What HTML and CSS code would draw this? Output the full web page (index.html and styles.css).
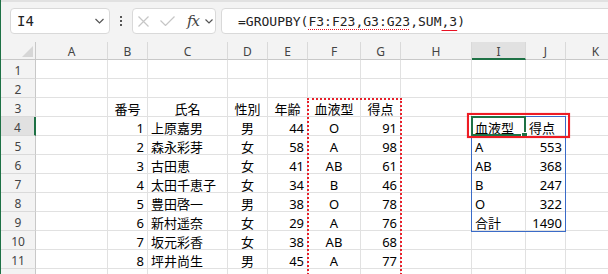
FILE: index.html
```html
<!DOCTYPE html>
<html>
<head>
    <meta charset="utf-8">
    <title>GROUPBY</title>
    <link rel="stylesheet" href="styles.css">
</head>
<body>
    <div class="app">
        <div class="formula-bar">
            <div class="name-box">
                <span class="name-text">I4</span>
                <svg class="chevron" width="9" height="6" viewBox="0 0 9 6"><polyline points="0.5,1 4.5,5 8.5,1"/></svg>
            </div>
            <div class="grip"><span></span><span></span><span></span></div>
            <div class="fx-box">
                <svg class="cancel" width="13" height="11" viewBox="0 0 13 11"><path d="M1.5 0.5 L11.5 10.5 M11.5 0.5 L1.5 10.5"/></svg>
                <svg class="enter" width="15" height="10" viewBox="0 0 15 10"><path d="M0.5 4.5 L5.5 9.5 L14.5 0.5"/></svg>
                <span class="fx">fx</span>
                <svg class="chevron" width="8" height="5" viewBox="0 0 8 5"><polyline points="0.5,0.5 4,4 7.5,0.5"/></svg>
            </div>
            <div class="formula">=GROUPBY(<span class="ref">F3:F23,G3:G23</span>,SUM<span class="arg">,3</span>)</div>
        </div>

        <div class="grid">
            <div class="corner"></div><div class="ch">A</div><div class="ch">B</div><div class="ch">C</div><div class="ch">D</div><div class="ch">E</div><div class="ch">F</div><div class="ch">G</div><div class="ch">H</div><div class="ch sel">I</div><div class="ch">J</div><div class="ch">K</div>

            <div class="rh">1</div><div></div><div></div><div></div><div></div><div></div><div></div><div></div><div></div><div></div><div></div><div></div>
            <div class="rh">2</div><div></div><div></div><div></div><div></div><div></div><div></div><div></div><div></div><div></div><div></div><div></div>
            <div class="rh">3</div><div></div><div class="m">番号</div><div class="m">氏名</div><div class="m">性別</div><div class="m">年齢</div><div class="m">血液型</div><div class="m">得点</div><div></div><div></div><div></div><div></div>
            <div class="rh sel">4</div><div></div><div class="r">1</div><div>上原嘉男</div><div class="m">男</div><div class="r">44</div><div class="m">O</div><div class="r">91</div><div></div><div>血液型</div><div>得点</div><div></div>
            <div class="rh">5</div><div></div><div class="r">2</div><div>森永彩芽</div><div class="m">女</div><div class="r">58</div><div class="m">A</div><div class="r">98</div><div></div><div>A</div><div class="r">553</div><div></div>
            <div class="rh">6</div><div></div><div class="r">3</div><div>古田恵</div><div class="m">女</div><div class="r">41</div><div class="m">AB</div><div class="r">61</div><div></div><div>AB</div><div class="r">368</div><div></div>
            <div class="rh">7</div><div></div><div class="r">4</div><div>太田千恵子</div><div class="m">女</div><div class="r">34</div><div class="m">B</div><div class="r">46</div><div></div><div>B</div><div class="r">247</div><div></div>
            <div class="rh">8</div><div></div><div class="r">5</div><div>豊田啓一</div><div class="m">男</div><div class="r">38</div><div class="m">O</div><div class="r">78</div><div></div><div>O</div><div class="r">322</div><div></div>
            <div class="rh">9</div><div></div><div class="r">6</div><div>新村遥奈</div><div class="m">女</div><div class="r">29</div><div class="m">A</div><div class="r">76</div><div></div><div>合計</div><div class="r">1490</div><div></div>
            <div class="rh">10</div><div></div><div class="r">7</div><div>坂元彩香</div><div class="m">女</div><div class="r">38</div><div class="m">AB</div><div class="r">68</div><div></div><div></div><div></div><div></div>
            <div class="rh">11</div><div></div><div class="r">8</div><div>坪井尚生</div><div class="m">男</div><div class="r">45</div><div class="m">A</div><div class="r">77</div><div></div><div></div><div></div><div></div>
            <div class="rh">12</div><div></div><div class="r">9</div><div>中村美咲</div><div class="m">女</div><div class="r">52</div><div class="m">O</div><div class="r">85</div><div></div><div></div><div></div><div></div>
        </div>

        <!-- range highlights drawn over the grid -->
        <div class="marquee"></div>
        <div class="spill"></div>
        <div class="active"></div>
        <div class="handle"></div>
        <div class="callout"></div>
    </div>
</body>
</html>
```

FILE: styles.css
```css
body {
    margin: 0;
    background: #fff;
    overflow: hidden;
}

.app {
    position: relative;
    height: 274px;
    overflow: hidden;
    border-left: 1px solid #1e7145;
    font-family: "Noto Sans", "Noto Sans CJK JP", sans-serif;
    color: #000;
}

/* Formula bar */
.formula-bar {
    height: 42px;
    box-sizing: border-box;
    border-top: 2px solid #e1e1e1;
    background: #f3f3f3;
    display: flex;
    align-items: flex-start;
    padding: 6px 0 0 9px;
}

.name-box,
.fx-box,
.formula {
    height: 26px;
    box-sizing: border-box;
    background: #fff;
    border: 1px solid #d9d9d9;
    border-radius: 4px;
    display: flex;
    align-items: center;
}

.name-box {
    width: 100px;
    justify-content: space-between;
    padding: 0 5px 0 6px;
}

.name-text {
    font-family: "DejaVu Sans Mono", monospace;
    font-size: 14px;
    color: #222;
}

.chevron polyline {
    fill: none;
    stroke: #555;
    stroke-width: 1.2;
}

.grip {
    width: 22px;
    height: 26px;
    display: flex;
    flex-direction: column;
    align-items: center;
    justify-content: center;
    gap: 2px;
}

.grip span {
    width: 2px;
    height: 2px;
    background: #555;
}

.fx-box {
    width: 84px;
    padding-left: 4px;
}

.cancel path,
.enter path {
    fill: none;
    stroke: #c6c6c6;
    stroke-width: 1.2;
}

.enter {
    margin-left: 10px;
}

.fx {
    margin-left: 12px;
    font-family: "DejaVu Serif", serif;
    font-style: italic;
    font-size: 15px;
    color: #444;
    letter-spacing: -1px;
}

.fx-box .chevron {
    margin-left: 6px;
}

.formula {
    flex: 1;
    margin: 0 -30px 0 5px;
    padding: 1px 0 0 16px;
    font-family: "DejaVu Sans Mono", monospace;
    font-size: 13px;
    color: #222;
    white-space: nowrap;
}

.ref {
    text-decoration: underline dotted #e81123;
    text-decoration-thickness: 1px;
    text-underline-offset: 3px;
}

.arg {
    text-decoration: underline solid #e81123;
    text-decoration-thickness: 1px;
    text-underline-offset: 4px;
}

/* Sheet */
.grid {
    display: grid;
    grid-template-columns: 35px 72px 40px 80px 40px 40px 53px 40px 71px 54px 40px 60px;
    grid-template-rows: 18px;
    grid-auto-rows: 19px;
}

.grid > div {
    box-sizing: border-box;
    border-right: 1px solid #e1e1e1;
    border-bottom: 1px solid #e1e1e1;
    padding: 0 3px;
    font-size: 13px;
    line-height: 22px;
    white-space: nowrap;
    overflow: hidden;
}

.grid > .m {
    text-align: center;
    padding: 0;
}

.grid > .r {
    text-align: right;
}

.grid > .corner {
    position: relative;
    background: #f3f3f3;
    border-right-color: #c8c8c8;
    border-bottom-color: #c8c8c8;
}

.corner:after {
    content: "";
    position: absolute;
    right: 2px;
    bottom: 2px;
    border-style: solid;
    border-width: 0 0 11px 11px;
    border-color: transparent transparent #d6d6d6 transparent;
}

.grid > .ch {
    background: #f3f3f3;
    border-right-color: #d9d9d9;
    border-bottom-color: #c8c8c8;
    text-align: center;
    font-size: 12px;
    line-height: 19px;
    color: #444;
}

.grid > .rh {
    background: #f3f3f3;
    border-right-color: #c8c8c8;
    border-bottom-color: #dadada;
    text-align: center;
    padding: 0;
    font-size: 12px;
    line-height: 21px;
    color: #444;
}

.grid > .ch.sel {
    background: #e1e1e1;
    border-bottom: 2px solid #1e7145;
}

.grid > .rh.sel {
    background: #e1e1e1;
    border-right: 2px solid #1e7145;
}

/* Overlays */
.marquee {
    position: absolute;
    left: 306px;
    top: 98px;
    width: 95px;
    height: 300px;
    box-sizing: border-box;
    border: 2px dotted #e8202a;
}

.spill {
    position: absolute;
    left: 470px;
    top: 116px;
    width: 95px;
    height: 116px;
    box-sizing: border-box;
    border: 1px solid #3a6bc8;
}

.active {
    position: absolute;
    left: 470px;
    top: 116px;
    width: 55px;
    height: 20px;
    box-sizing: border-box;
    border: 2px solid #1e7145;
}

.handle {
    position: absolute;
    left: 520px;
    top: 132px;
    width: 7px;
    height: 7px;
    box-sizing: border-box;
    border: 1px solid #fff;
    background: #1e7145;
}

.callout {
    position: absolute;
    left: 466px;
    top: 113px;
    width: 103px;
    height: 25px;
    box-sizing: border-box;
    border: 2px solid #ee1c24;
    box-shadow: 0 0 1px rgba(238, 28, 36, 0.5);
}
```
